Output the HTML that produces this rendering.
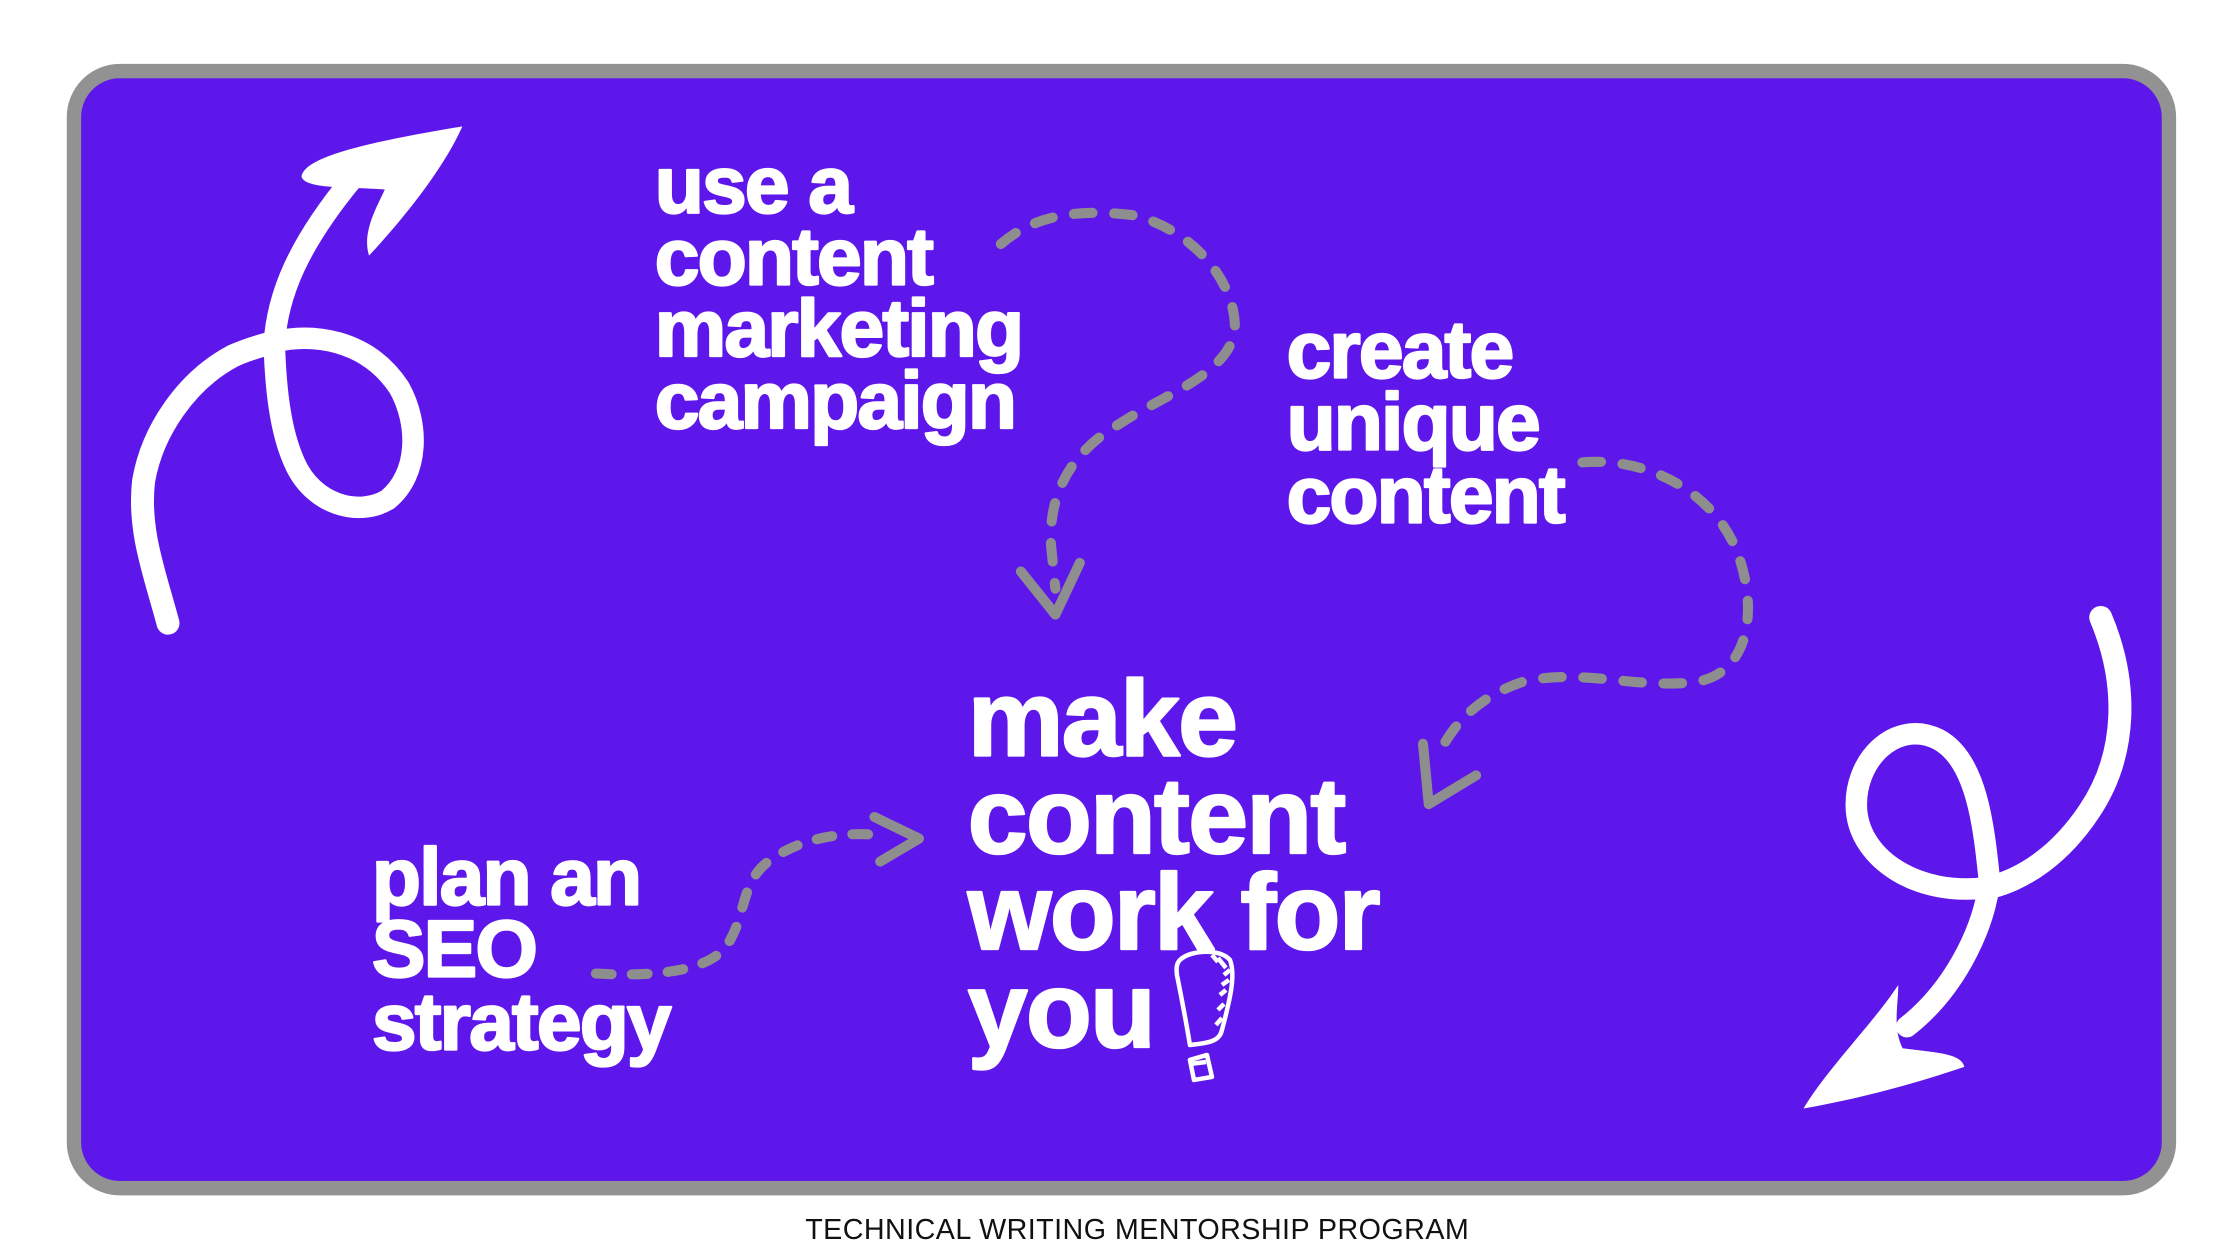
<!DOCTYPE html>
<html><head><meta charset="utf-8">
<style>
html,body{margin:0;padding:0;background:#fff;}
svg{display:block;}
text{font-family:"Liberation Sans",Arial,sans-serif;font-weight:bold;}
.w{fill:#fff;stroke:#fff;stroke-width:1.6;stroke-linejoin:round;}
</style></head>
<body>
<svg width="2240" height="1260" viewBox="0 0 1560 877.5" xmlns="http://www.w3.org/2000/svg">
  <rect x="0" y="0" width="1560" height="877.5" fill="#fff"/>
  <rect x="51.5" y="49.5" width="1459" height="778" rx="32" fill="#5E17EB" stroke="#929292" stroke-width="10"/>

  <g class="w" font-size="56" letter-spacing="-1.3">
    <text class="w" x="456" y="148">use a</text>
    <text class="w" x="456" y="198">content</text>
    <text class="w" x="456" y="248">marketing</text>
    <text class="w" x="456" y="298">campaign</text>

    <text class="w" x="896" y="263">create</text>
    <text class="w" x="896" y="313">unique</text>
    <text class="w" x="896" y="364">content</text>

    <text class="w" x="259" y="630">plan an</text>
    <text class="w" x="259" y="680">SEO</text>
    <text class="w" x="259" y="731">strategy</text>
  </g>
  <g font-size="75" letter-spacing="-1.2">
    <text class="w" x="674" y="526">make</text>
    <text class="w" x="674" y="594">content</text>
    <text class="w" x="674" y="661">work for</text>
    <text class="w" x="674" y="729">you</text>
  </g>

  <g transform="scale(0.6964)" fill="none" stroke="#fff" stroke-width="4.5" stroke-linejoin="round">
    <path d="M1180,960 C1190,950 1220,948 1230,960 C1236,975 1230,1000 1222,1030 C1220,1040 1212,1043 1190,1045 C1185,1015 1180,990 1177,975 C1176,967 1177,963 1180,960 Z"/>
    <path d="M1212,955 L1218,962 M1218,958 L1226,968 M1224,975 L1230,970 M1222,985 L1229,980 M1220,995 L1226,990 M1218,1010 L1224,1004 M1216,1025 L1222,1018"/>
    <path d="M1190,1060 L1207,1055 L1212,1077 L1194,1080 Z M1190,1064 L1206,1062"/>
  </g>

  <g fill="none" stroke="#8E8E8E" stroke-width="7" stroke-linecap="round" stroke-linejoin="round">
    <path d="M697,170 C720,150 750,145 790,150 C830,160 860,195 860,228 C858,260 810,275 780,295 C745,315 730,345 732,380 L735,410" stroke-dasharray="13 15"/>
    <path d="M711,398 L735,428 L752,392"/>
    <path d="M1102,322 C1150,318 1195,345 1210,385 C1225,425 1218,470 1180,475 C1140,480 1100,465 1060,475 C1030,485 1010,505 1000,530" stroke-dasharray="13 15"/>
    <path d="M991,518 L995,560 L1028,540"/>
    <path d="M415,678 C450,680 490,678 505,660 C520,640 515,615 535,600 C555,585 585,578 615,582" stroke-dasharray="11 14"/>
    <path d="M609,569 L640,584 L613,600"/>
  </g>

  <g fill="none" stroke="#fff" stroke-linecap="round" stroke-linejoin="round">
    <path d="M117,434 C108,400 96,370 100,335 C106,300 130,265 162,248 C175,242 185,240 192,238" stroke-width="16"/>
    <path d="M192,238 C215,232 255,235 278,270 C292,295 292,330 270,348 C250,360 218,352 205,322 C195,300 192,270 191,240 C193,205 208,170 245,125" stroke-width="15"/>
  </g>
  <path fill="#fff" d="M210,123 C212,110 250,100 322,88 C310,115 285,148 257,178 C252,162 262,145 268,132 C245,130 212,132 210,123 Z"/>

  <g fill="none" stroke="#fff" stroke-linecap="round" stroke-linejoin="round">
    <path d="M1463,430 C1482,475 1482,525 1455,565 C1435,595 1410,612 1386,618" stroke-width="16"/>
    <path d="M1386,618 C1382,580 1378,530 1350,515 C1320,500 1290,530 1293,565 C1296,598 1335,625 1385,618 C1380,650 1360,690 1328,715" stroke-width="15"/>
  </g>
  <path fill="#fff" d="M1322,686 C1305,712 1272,745 1256,772 C1290,766 1330,756 1368,743 C1366,733 1345,733 1325,730 C1318,716 1322,700 1322,686 Z"/>

  <text x="792" y="863" text-anchor="middle" font-size="20" style="font-weight:normal;fill:#111;" letter-spacing="0.3">TECHNICAL WRITING MENTORSHIP PROGRAM</text>
</svg>
</body></html>
